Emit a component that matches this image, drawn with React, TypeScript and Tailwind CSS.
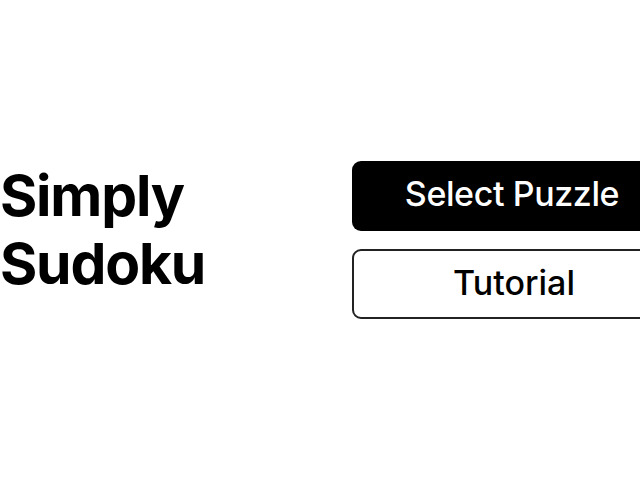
import React from 'react';

export default function App() {
  return (
    <div className="h-[480px] w-[640px] overflow-hidden bg-white text-black font-['Inter',sans-serif]">
      <div className="flex h-full items-center">
        {/* Title */}
        <div className="w-[352px] shrink-0 -mt-[20px]">
          <h1 className="text-[57px] font-bold leading-[68px] tracking-[-1.2px]">
            Simply
            <br />
            Sudoku
          </h1>
        </div>

        {/* Menu */}
        <div className="flex w-[320px] shrink-0 flex-col gap-[18px]">
          <button className="h-[70px] w-full rounded-[9px] bg-black pb-[5px] text-[34px] font-medium tracking-[-0.4px] text-white">
            Select Puzzle
          </button>
          <button className="h-[70px] w-full rounded-[9px] border-2 border-[#222] bg-white pb-[4px] pl-[4px] text-[34px] font-medium text-black">
            Tutorial
          </button>
        </div>
      </div>
    </div>
  );
}
